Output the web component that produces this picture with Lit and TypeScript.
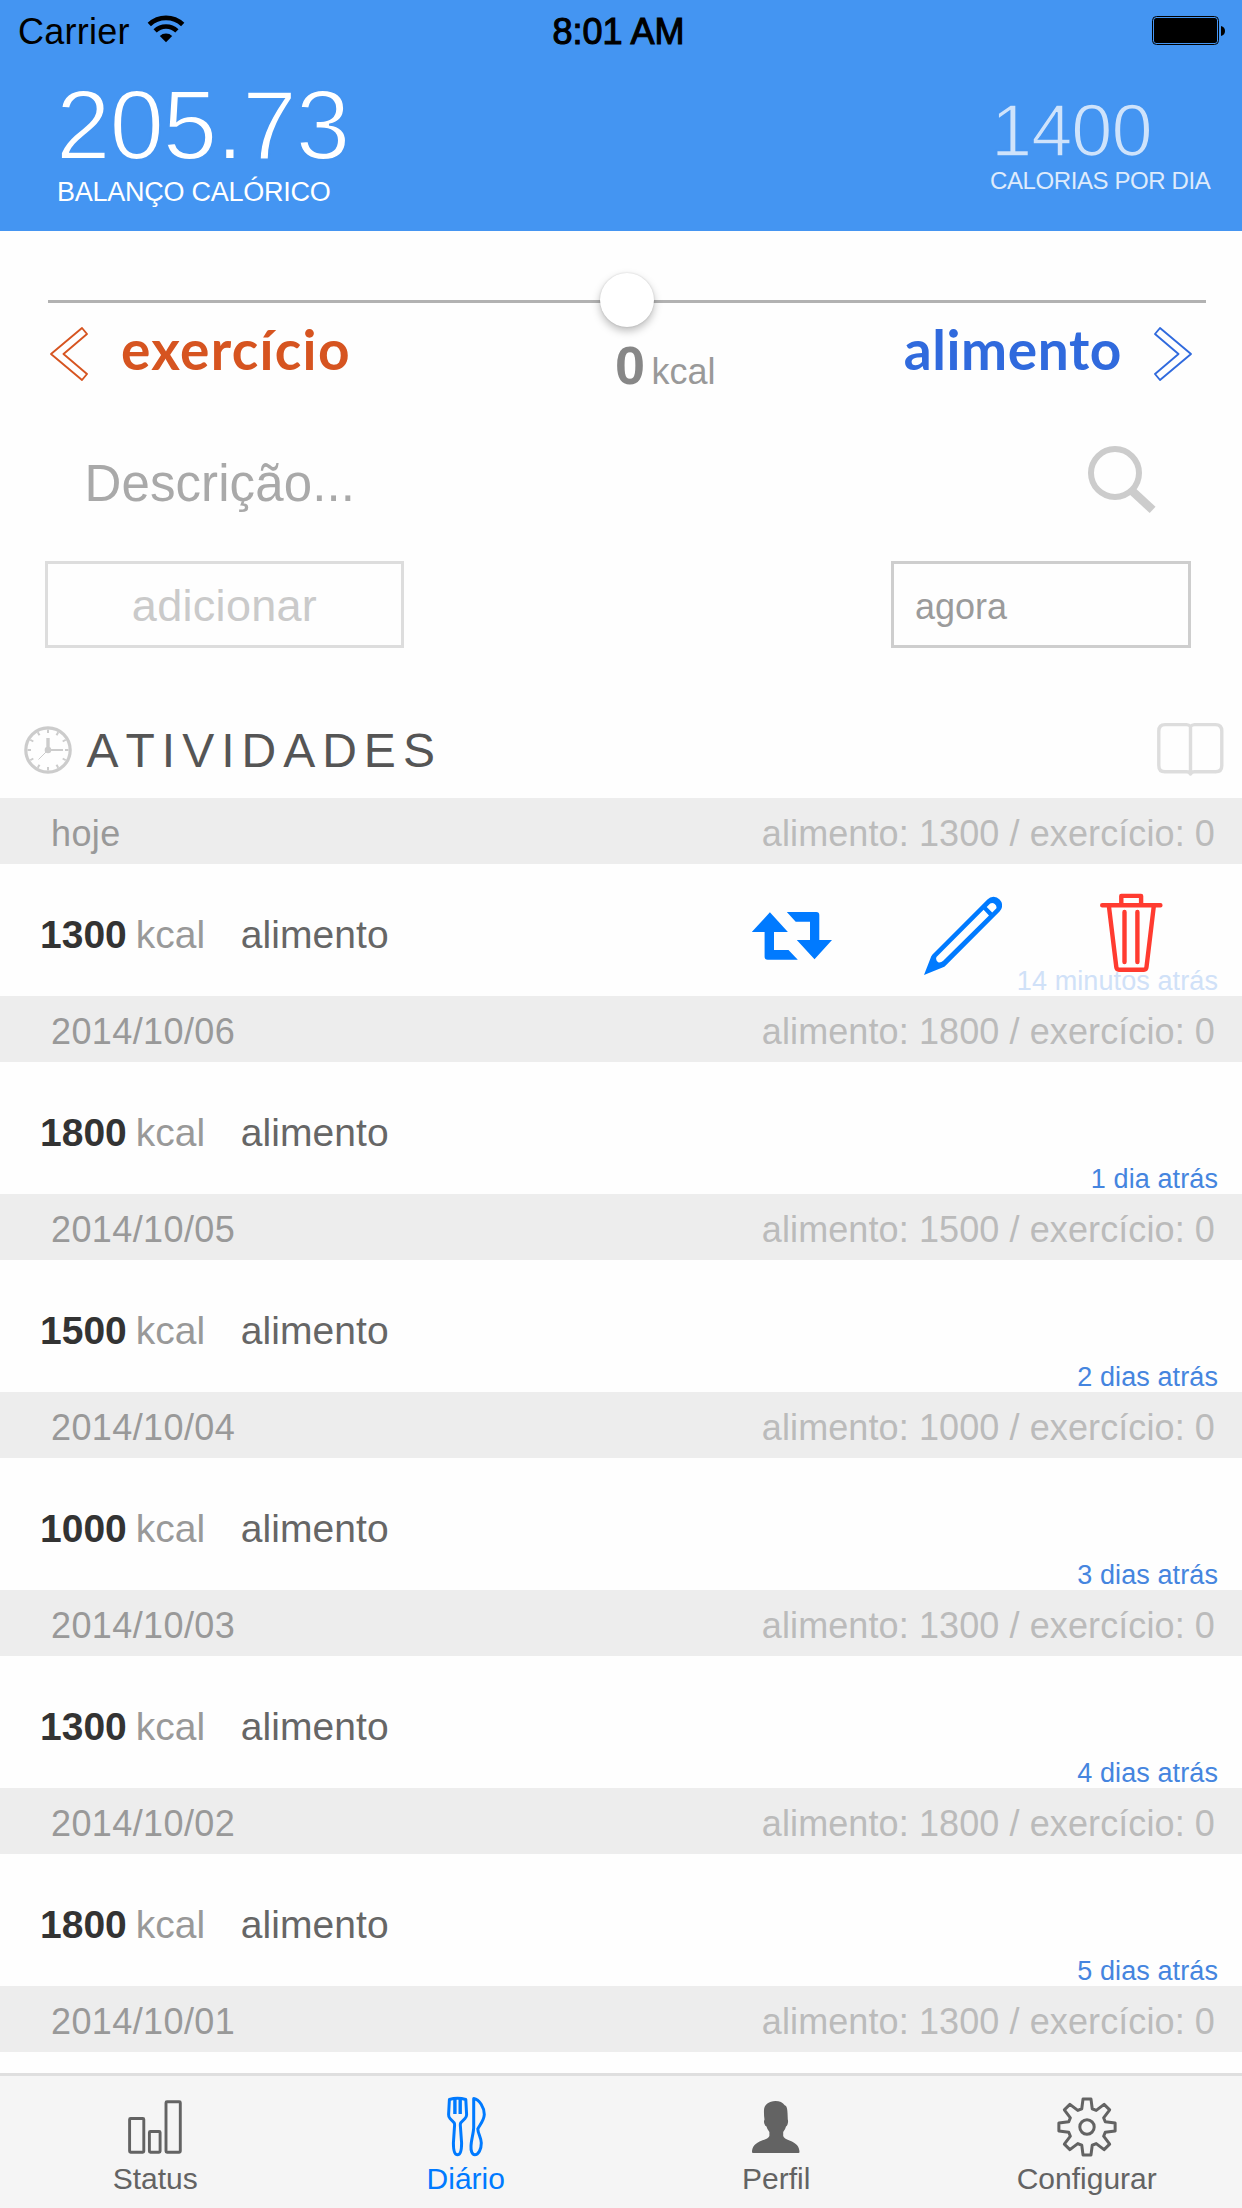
import { LitElement, html, svg, css } from "lit";
import { customElement, property } from "lit/decorators.js";

interface Entry {
  day: string;
  kcal: number;
  ago: string;
  open?: boolean;
}

const entries: Entry[] = [
  { day: "hoje", kcal: 1300, ago: "14 minutos atrás", open: true },
  { day: "2014/10/06", kcal: 1800, ago: "1 dia atrás" },
  { day: "2014/10/05", kcal: 1500, ago: "2 dias atrás" },
  { day: "2014/10/04", kcal: 1000, ago: "3 dias atrás" },
  { day: "2014/10/03", kcal: 1300, ago: "4 dias atrás" },
  { day: "2014/10/02", kcal: 1800, ago: "5 dias atrás" },
  { day: "2014/10/01", kcal: 1300, ago: "" },
];

// Eight-toothed cog outline centred on the origin.
const gearPath = (() => {
  const pts: string[] = [];
  for (let i = 0; i < 8; i++) {
    for (const [r, a] of [[19, -16], [28.4, -8], [28.4, 8], [19, 16]]) {
      const t = ((i * 45 + a) * Math.PI) / 180;
      pts.push(`${(r * Math.sin(t)).toFixed(2)} ${(-r * Math.cos(t)).toFixed(2)}`);
    }
  }
  return `M${pts.join("L")}Z`;
})();

const clockTicks = Array.from({ length: 12 }, (_, i) => i * 30);

const wifi = html`<svg width="38" height="28" viewBox="146.5 15.5 38 28">
  <path d="M148.8 25.1A24.3 24.3 0 0 1 182.2 25.1" fill="none" stroke="#000" stroke-width="4.8" />
  <path d="M154.6 31.4A15.6 15.6 0 0 1 176.4 31.4" fill="none" stroke="#000" stroke-width="4.6" />
  <path d="M165.5 42.7L159.3 36.4A9 9 0 0 1 171.7 36.4Z" />
</svg>`;

const battery = html`<svg width="74" height="30" viewBox="1152 16 74 30">
  <rect x="1152.5" y="16.5" width="66" height="28" rx="4" fill="none" stroke="#000" />
  <rect x="1154" y="18" width="63" height="25" rx="2.5" />
  <path d="M1221 26q4 1 4 5t-4 5z" />
</svg>`;

const chevron = html`<svg width="38" height="54" viewBox="50 327 38 54">
  <path d="M51 354L82 328L87 334L63.5 354L87 374L82 380Z" fill="none" stroke="currentColor" stroke-width="1.9" stroke-linejoin="round" />
</svg>`;

const search = html`<svg width="68" height="68" viewBox="1088 446 68 68">
  <circle cx="1115" cy="473" r="24" fill="none" stroke="#ccc" stroke-width="6" />
  <path d="M1131.500 490.300L1152.600 509.900" stroke="#ccc" stroke-width="8.6" />
</svg>`;

const clock = html`<svg width="48" height="48" viewBox="-24 -24 48 48">
  <circle r="22.2" fill="none" stroke="#ccc" stroke-width="3.2" />
  ${clockTicks.map((a) => svg`<path d="M0 -20.5V-17" stroke="#ccc" stroke-width="2" transform="rotate(${a})" />`)}
  <path d="M0 0V-12" stroke="#ccc" stroke-width="3.4" />
  <path d="M0 0H15" stroke="#ccc" stroke-width="2" />
  <path d="M0 0L-9.5 9.5" stroke="#ccc" stroke-width="1" />
  <circle r="3.3" fill="#ccc" />
</svg>`;

const book = html`<svg width="67" height="54" viewBox="1156.5 722 67 54">
  <path d="M1190 726.5Q1188.500 724.600 1186 724.600H1164.500Q1158.300 724.600 1158.300 731V765.500Q1158.300 771.800 1164.500 771.800H1186Q1189 771.800 1190 774Q1191 771.800 1194 771.800H1215Q1221.300 771.800 1221.300 765.500V731Q1221.300 724.600 1215 724.600H1194Q1191.500 724.600 1190 726.500V773" fill="none" stroke="#ddd" stroke-width="3.4" stroke-linejoin="round" />
</svg>`;

const repeat = html`<svg width="80" height="90" viewBox="752 890 80 90">
  <path fill="#007aff" d="M769.9 912.3L787.900 932H774V950H788.500L797.800 959.700H767.600Q764.600 959.700 764.600 956.700V932H751.800Z" />
  <path fill="#007aff" d="M786.800 912H816.300Q819.300 912 819.300 915V940H832L814.500 959.300L796.800 940H810V921.700H795.700Z" />
</svg>`;

const pencil = html`<svg width="78" height="90" viewBox="924 890 78 90">
  <path fill="#007aff" fill-rule="evenodd" d="M924 975L930.600 958Q931 956 932.500 954.500L987.400 899.400A8.600 8.600 0 0 1 999.600 911.600L946 965.300Q944.500 966.900 942.500 967.600ZM936.500 957L983.600 909.800L989 915.500L943.200 960.800Q941 962.800 938 962.300Q935.200 960 936.500 957ZM986.700 907L990.200 903.500A4.400 4.400 0 0 1 996.400 908.300L992.200 912.600Z" />
</svg>`;

const trash = html`<svg width="63" height="90" viewBox="1100 890 63 90">
  <g fill="none" stroke="#ff3b30" stroke-width="4.400" stroke-linecap="round" stroke-linejoin="round">
    <path d="M1102.200 905.300H1160.400M1121.300 904V895.900H1141.100V904M1109 907L1116.300 967Q1116.600 969.700 1119 969.700H1144Q1146.200 969.700 1146.500 967L1153.700 907M1124.500 912V962M1137.400 912V962" />
  </g>
</svg>`;

const tabIcons = {
  status: html`<svg width="60" height="64" viewBox="125.500 2095 60 64">
    <g fill="none" stroke="currentColor" stroke-width="2.900">
      <rect x="130.100" y="2118.500" width="14.200" height="33.800" rx="1" />
      <rect x="149.900" y="2131.500" width="10.700" height="20.800" rx="1" />
      <rect x="166.500" y="2101.800" width="14.300" height="50.500" rx="1" />
    </g>
  </svg>`,
  diary: html`<svg width="60" height="64" viewBox="436 2095 60 64">
    <g fill="none" stroke="currentColor" stroke-width="3" stroke-linejoin="round">
      <path d="M449.400 2099.500Q457.500 2097 465.800 2099.500L466.600 2114.500Q466.600 2117 465 2118.500L461 2122.500Q460.200 2123.500 460.300 2125L461.600 2143Q461.600 2154.800 457.500 2154.800Q453.400 2154.800 453.400 2143L454.600 2125Q454.700 2123.500 453.900 2122.500L450 2118.500Q448.500 2117 448.600 2114.500Z" />
      <path d="M454.900 2098.500V2114M460.200 2098.500V2114" stroke-width="3.400" />
      <path d="M473.700 2098.500C479.500 2099.500 484.300 2107.500 484.300 2114.500C484 2120.500 480 2124.500 477.800 2129C478 2134 481.300 2137.500 481.300 2143C481.300 2149.500 478.500 2154.800 474.800 2154.800C471.800 2154.800 470.800 2150.500 471 2146C471.200 2139.500 473.700 2133 473.700 2127Z" />
    </g>
  </svg>`,
  profile: html`<svg width="60" height="64" viewBox="746.500 2095 60 64">
    <path fill="currentColor" d="M776 2101C780 2101 783.500 2102.500 785.200 2105.200C788 2106.300 788 2110 788.300 2119.500Q789 2121.500 788 2124.500Q787.500 2126 786.500 2126.500Q785.800 2129.500 783.700 2132V2136Q784.500 2138.500 790 2140.500C797 2143 800 2147 800 2152Q800 2152.900 799 2152.900H753.500Q752.500 2152.900 752.500 2152C752.500 2147 755.500 2143 762.500 2140.500Q769 2138.500 769.900 2136V2132Q767.700 2129.500 767 2126.500Q765.600 2126 765 2124Q764 2121.500 765 2119.500Q764.300 2115 764.500 2110C764.800 2104.500 769.500 2101 776 2101Z" />
  </svg>`,
  settings: html`<svg width="60" height="64" viewBox="-30 -32 60 64">
    <g fill="none" stroke="currentColor" stroke-width="3" stroke-linejoin="round">
      <path d=${gearPath} />
      <circle r="7.200" />
    </g>
  </svg>`,
};

@customElement("diary-entry")
class DiaryEntry extends LitElement {
  @property({ attribute: false }) entry!: Entry;

  static styles = css`
    :host {
      display: block;
      flex: none;
    }
    .day {
      box-sizing: border-box;
      height: 66px;
      padding: 5px 27px 0 51px;
      display: flex;
      align-items: center;
      justify-content: space-between;
      background: #ededed;
      color: #999;
      font-size: 36px;
      line-height: 61px;
    }
    .date {
      letter-spacing: 0.4px;
    }
    .totals {
      color: #bbb;
      letter-spacing: 0.1px;
    }
    .row {
      height: 132px;
      display: grid;
    }
    .row > * {
      grid-area: 1 / 1;
    }
    .main {
      display: flex;
      align-items: baseline;
      padding: 9px 0 0 40px;
      font-size: 39px;
      line-height: 123px;
    }
    .amount {
      font-weight: bold;
      color: #333;
    }
    .unit {
      color: #999;
      margin-left: 9px;
    }
    .kind {
      color: #666;
      margin-left: 35.5px;
      letter-spacing: 0.1px;
    }
    .ago {
      align-self: end;
      justify-self: end;
      padding-right: 24px;
      font-size: 27px;
      line-height: 29px;
      letter-spacing: 0.1px;
      color: #4585df;
    }
    .ago.faded {
      color: #d0e1f8;
    }
    .actions {
      display: flex;
      align-self: start;
      justify-self: end;
      padding: 26px 79px 0 0;
    }
    .actions svg + svg {
      margin-left: 92px;
    }
    .actions svg:last-child {
      margin-left: 98px;
    }
    svg {
      display: block;
    }
  `;

  render() {
    const { day, kcal, ago, open } = this.entry;
    return html`
      <div class="day">
        <span class="date">${day}</span>
        <span class="totals">alimento: ${kcal} / exercício: 0</span>
      </div>
      ${ago
        ? html`<div class="row">
            <div class="main">
              <span class="amount">${kcal}</span>
              <span class="unit">kcal</span>
              <span class="kind">alimento</span>
            </div>
            <span class="ago ${open ? "faded" : ""}">${ago}</span>
            ${open ? html`<div class="actions">${repeat}${pencil}${trash}</div>` : ""}
          </div>`
        : ""}
    `;
  }
}

@customElement("app-root")
class AppRoot extends LitElement {
  static styles = css`
    :host {
      display: flex;
      flex-direction: column;
      width: 1242px;
      height: 2208px;
      overflow: hidden;
      background: #fefefe;
      font-family: "Liberation Sans", Arial, sans-serif;
      white-space: nowrap;
    }
    svg {
      display: block;
      flex: none;
    }
    .top {
      flex: none;
      height: 231px;
      background: #4495f2;
      color: #fff;
    }
    .status {
      display: grid;
      grid-template-columns: 1fr auto 1fr;
      height: 63px;
      line-height: 63px;
      font-size: 36px;
      color: #000;
      padding: 0 16px 0 18px;
    }
    .carrier {
      display: flex;
      gap: 17px;
      letter-spacing: 0.25px;
    }
    .carrier svg {
      margin-top: 15px;
    }
    .clock-text {
      -webkit-text-stroke: 1.1px #000;
      padding-right: 7px;
    }
    .battery {
      justify-self: end;
      margin-top: 16px;
    }
    .figures {
      display: flex;
      justify-content: space-between;
      padding: 13px 0 0 56px;
    }
    .balance {
      font-size: 98px;
      line-height: 98px;
      letter-spacing: -1.1px;
      -webkit-text-stroke: 2px #4495f2;
    }
    .balance-label {
      font-size: 27px;
      line-height: 36px;
      letter-spacing: -0.25px;
      margin-left: 1px;
    }
    .goal {
      width: 252px;
      padding-top: 18px;
    }
    .goal-value {
      font-size: 74px;
      line-height: 74px;
      letter-spacing: -1px;
      margin-left: 1px;
      color: #cfe3fb;
      -webkit-text-stroke: 1.6px #4495f2;
    }
    .goal-label {
      font-size: 24px;
      line-height: 26px;
      letter-spacing: -0.4px;
      color: #deebfc;
    }
    .slider {
      display: grid;
      align-items: center;
      margin: 42px 36px 0 48px;
      height: 54px;
      flex: none;
    }
    .slider > * {
      grid-area: 1 / 1;
    }
    .track {
      height: 3px;
      margin-top: 3px;
      background: #b2b2b2;
    }
    .thumb {
      justify-self: center;
      width: 54px;
      height: 54px;
      border-radius: 50%;
      background: #fff;
      box-shadow: 0 4px 8px rgba(0, 0, 0, 0.26), 0 0 2px rgba(0, 0, 0, 0.16);
    }
    .sides {
      flex: none;
      display: flex;
      align-items: flex-start;
      height: 76px;
      padding: 0 50px;
    }
    .side {
      display: flex;
      font-family: Lato, sans-serif;
      font-weight: bold;
      font-size: 55px;
      line-height: 44px;
    }
    .exercise {
      width: 565px;
      gap: 33px;
      letter-spacing: 1.3px;
      color: #d65420;
    }
    .food {
      margin-left: auto;
      gap: 32px;
      letter-spacing: 0.6px;
      color: #306add;
    }
    .food svg {
      transform: scaleX(-1);
    }
    .value {
      display: flex;
      align-items: baseline;
      gap: 6.5px;
      font-size: 54px;
      line-height: 76px;
      font-weight: bold;
      color: #878787;
    }
    .value-unit {
      font-size: 36px;
      font-weight: normal;
      color: #999;
    }
    .describe {
      flex: none;
      display: flex;
      justify-content: space-between;
      margin-top: 43px;
      padding: 0 86px 0 84.5px;
      height: 76px;
      line-height: 76px;
      font-size: 51px;
      letter-spacing: 0.1px;
      color: #a9a9a9;
    }
    .buttons {
      flex: none;
      display: flex;
      justify-content: space-between;
      margin-top: 39px;
      padding: 0 51px 0 45px;
    }
    .box {
      box-sizing: border-box;
      height: 87px;
      padding-top: 2px;
      line-height: 79px;
      border: 3px solid #ddd;
    }
    .add {
      width: 359px;
      text-align: center;
      font-size: 45px;
      letter-spacing: 0.3px;
      color: #cacaca;
    }
    .when {
      width: 300px;
      padding-left: 21px;
      font-size: 36px;
      line-height: 81px;
      color: #9b9b9b;
      border-color: #cecece;
    }
    .title {
      flex: none;
      display: flex;
      height: 76px;
      margin-top: 74px;
      padding: 0 18.5px 0 24px;
    }
    .title svg:first-child {
      margin-top: 4px;
    }
    .title-text {
      flex: 1;
      margin-left: 14.5px;
      font-size: 48px;
      line-height: 57px;
      letter-spacing: 7px;
      font-kerning: none;
      color: #555;
    }
    .list {
      flex: 1;
      min-height: 0;
      overflow: hidden;
    }
    .tabs {
      box-sizing: border-box;
      flex: none;
      height: 135px;
      border-top: 3px solid #dfdfdf;
      background: #f5f5f5;
      display: grid;
      grid-template-columns: repeat(4, 1fr);
      padding-top: 19px;
    }
    .tab {
      display: flex;
      flex-direction: column;
      align-items: center;
      color: #636363;
      font-size: 30px;
      line-height: 40px;
    }
    .tab.active {
      color: #007aff;
    }
  `;

  render() {
    return html`
      <header class="top">
        <div class="status">
          <span class="carrier">Carrier ${wifi}</span>
          <span class="clock-text">8:01 AM</span>
          <span class="battery">${battery}</span>
        </div>
        <div class="figures">
          <div>
            <div class="balance">205.73</div>
            <div class="balance-label">BALANÇO CALÓRICO</div>
          </div>
          <div class="goal">
            <div class="goal-value">1400</div>
            <div class="goal-label">CALORIAS POR DIA</div>
          </div>
        </div>
      </header>
      <div class="slider">
        <div class="track"></div>
        <div class="thumb"></div>
      </div>
      <div class="sides">
        <div class="side exercise">${chevron}<span>exercício</span></div>
        <div class="value"><span>0</span><span class="value-unit">kcal</span></div>
        <div class="side food"><span>alimento</span>${chevron}</div>
      </div>
      <div class="describe"><span>Descrição...</span>${search}</div>
      <div class="buttons">
        <div class="box add">adicionar</div>
        <div class="box when">agora</div>
      </div>
      <div class="title">${clock}<span class="title-text">ATIVIDADES</span>${book}</div>
      <main class="list">
        ${entries.map((e) => html`<diary-entry .entry=${e}></diary-entry>`)}
      </main>
      <nav class="tabs">
        <div class="tab">${tabIcons.status}<span>Status</span></div>
        <div class="tab active">${tabIcons.diary}<span>Diário</span></div>
        <div class="tab">${tabIcons.profile}<span>Perfil</span></div>
        <div class="tab">${tabIcons.settings}<span>Configurar</span></div>
      </nav>
    `;
  }
}
